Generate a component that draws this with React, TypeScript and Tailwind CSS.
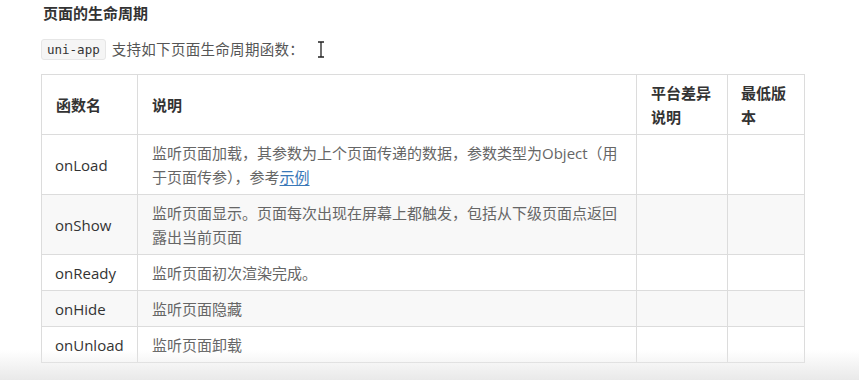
import React from "react";

const cjk = { fontFamily: '"Open Sans", "Noto Sans CJK SC", sans-serif' };

export default function App() {
  const rows: { name: string; desc: React.ReactNode; bg: string }[] = [
    {
      name: "onLoad",
      bg: "bg-white",
      desc: (
        <>
          监听页面加载，其参数为上个页面传递的数据，参数类型为Object（用
          <br />
          于页面传参），参考
          <a className="text-[#3a78b8] underline underline-offset-2">示例</a>
        </>
      ),
    },
    {
      name: "onShow",
      bg: "bg-[#f8f8f8]",
      desc: (
        <>
          监听页面显示。页面每次出现在屏幕上都触发，包括从下级页面点返回
          <br />
          露出当前页面
        </>
      ),
    },
    { name: "onReady", bg: "bg-white", desc: "监听页面初次渲染完成。" },
    { name: "onHide", bg: "bg-[#f8f8f8]", desc: "监听页面隐藏" },
    { name: "onUnload", bg: "bg-white", desc: "监听页面卸载" },
  ];

  return (
    <div className="relative h-[380px] w-[859px] overflow-hidden bg-white" style={cjk}>
      <div className="pl-[41px] pt-[3px]">
        <h3 className="pl-[2px] text-[15px] font-bold leading-5 text-[#333]">页面的生命周期</h3>
        <p className="mt-[16px] flex items-center text-[14.5px] leading-5 text-[#555]">
          <code
            className="rounded-[3px] border border-[#e6e6e6] bg-[#f5f5f5] px-[5px] py-[1px] text-[12.5px] leading-[17px] text-[#333]"
            style={{ fontFamily: '"DejaVu Sans Mono", monospace' }}
          >
            uni-app
          </code>
          <span className="ml-[6px] tracking-[0.3px]">支持如下页面生命周期函数：</span>
          <svg className="ml-[13px]" width="8" height="17" viewBox="0 0 8 17">
            <path d="M1 1h6M1 16h6M4 1v15" stroke="#222" strokeWidth="1.3" fill="none" />
          </svg>
        </p>
        <table className="mt-[14px] w-[763px] table-fixed border-collapse text-[15px] leading-6">
          <colgroup>
            <col className="w-[96px]" />
            <col className="w-[499px]" />
            <col className="w-[91px]" />
            <col className="w-[77px]" />
          </colgroup>
          <thead>
            <tr className="bg-white text-[#333]">
              <th className="border border-[#dcdcdc] px-[14px] pt-[6px] pb-[5px] text-left font-bold">函数名</th>
              <th className="border border-[#dcdcdc] px-[14px] pt-[6px] pb-[5px] text-left font-bold">说明</th>
              <th className="whitespace-nowrap border border-[#dcdcdc] px-[14px] pt-[6px] pb-[5px] text-left font-bold">
                平台差异
                <br />
                说明
              </th>
              <th className="whitespace-nowrap border border-[#dcdcdc] px-[13px] pt-[6px] pb-[5px] text-left font-bold">
                最低版
                <br />
                本
              </th>
            </tr>
          </thead>
          <tbody>
            {rows.map((r) => (
              <tr key={r.name} className={r.bg}>
                <td className="border border-[#dcdcdc] px-[13px] pt-[6px] pb-[5px] text-[#333]">{r.name}</td>
                <td className="whitespace-nowrap border border-[#dcdcdc] px-[14px] pt-[6px] pb-[5px] text-[#666]">
                  {r.desc}
                </td>
                <td className="border border-[#dcdcdc]"></td>
                <td className="border border-[#dcdcdc]"></td>
              </tr>
            ))}
          </tbody>
        </table>
      </div>
      <div className="pointer-events-none absolute bottom-0 left-0 h-[30px] w-full bg-gradient-to-b from-transparent to-[#e9e9e9]" />
    </div>
  );
}
